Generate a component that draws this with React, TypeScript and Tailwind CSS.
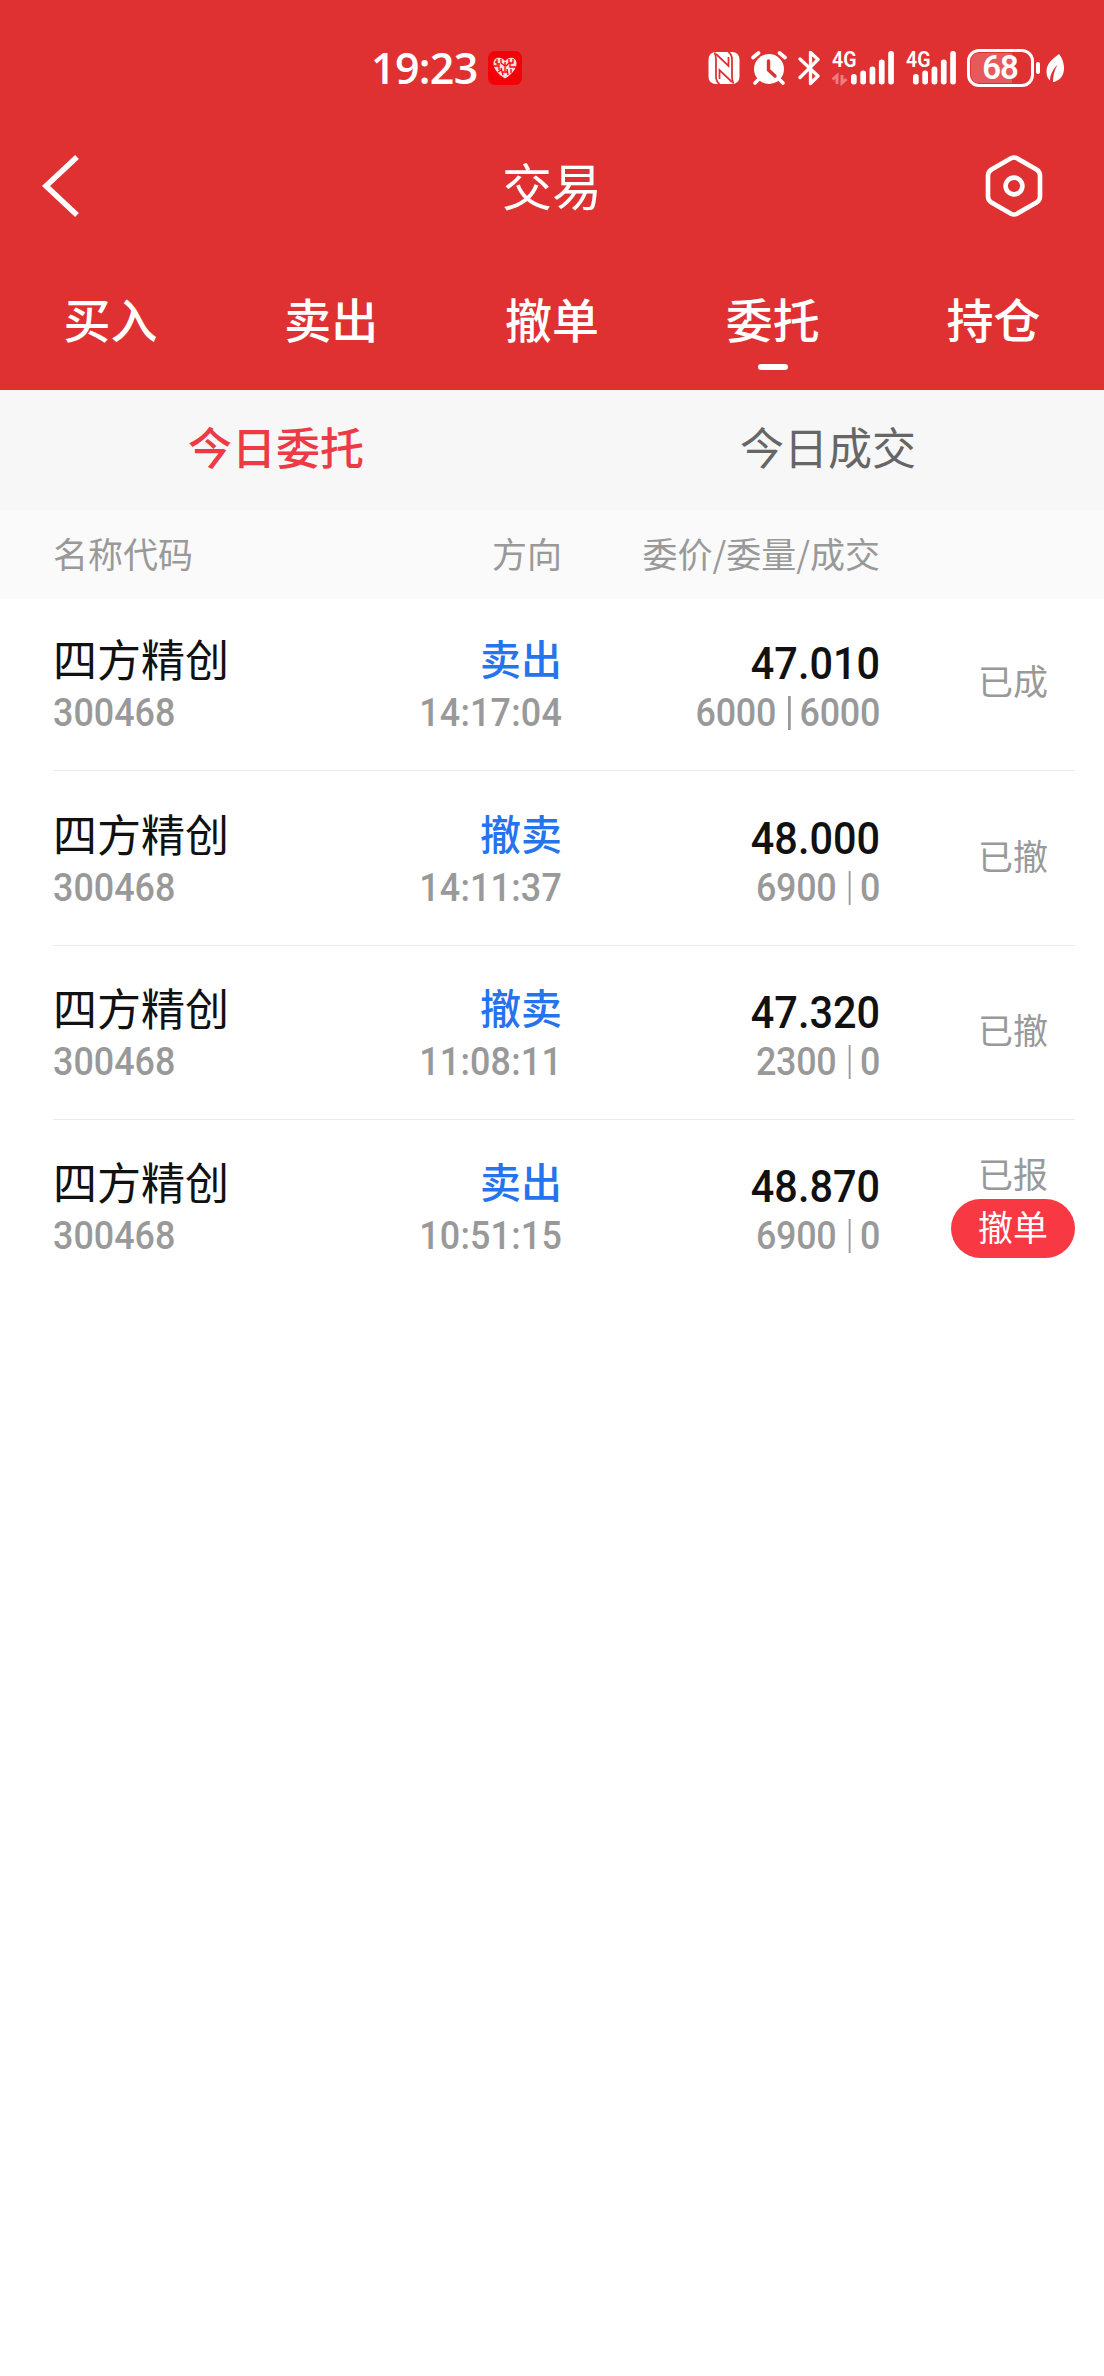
import clsx from "clsx"

interface Order {
  name: string
  code: string
  direction: string
  time: string
  price: string
  amount: string
  filled: string
  status: string
  cancellable?: boolean
}

const orders: Order[] = [
  { name: "四方精创", code: "300468", direction: "卖出", time: "14:17:04", price: "47.010", amount: "6000", filled: "6000", status: "已成" },
  { name: "四方精创", code: "300468", direction: "撤卖", time: "14:11:37", price: "48.000", amount: "6900", filled: "0", status: "已撤" },
  { name: "四方精创", code: "300468", direction: "撤卖", time: "11:08:11", price: "47.320", amount: "2300", filled: "0", status: "已撤" },
  { name: "四方精创", code: "300468", direction: "卖出", time: "10:51:15", price: "48.870", amount: "6900", filled: "0", status: "已报", cancellable: true },
]

const tabs = ["买入", "卖出", "撤单", "委托", "持仓"]

function AppBadge() {
  return (
    <svg className="ml-[11px]" width="34" height="34" viewBox="0 0 34 34">
      <rect width="34" height="34" rx="7" fill="#f30008" />
      <path
        d="M17 27.500C12 24.500 5.500 19 5.500 12.500C5.500 6 13 5 17 10C21 5 28.500 6 28.500 12.500C28.500 19 22 24.500 17 27.500Z"
        fill="#ffdcdc"
      />
      <path
        d="M9 8v5h3M6 15h5v4M13 8v4l4 3v-4M17 15v5M13 17l2 7M21 8v4l-3 3M25 8v4h-3v4h6M19 18l1 6M23 18v4M10 21l3-2M7 11h2M15 21h4"
        fill="none"
        stroke="#f30008"
        strokeWidth="1.300"
      />
    </svg>
  )
}

function NfcIcon() {
  return (
    <svg width="32" height="34" viewBox="0 0 32 34">
      <rect x="0.500" y="1" width="31" height="32" rx="7" fill="#fff" />
      {/* thin outlines leave a solid white N between the two side bars */}
      <path d="M6.500 1.500C8 4 8 6 8 9V26C8 29 9 31 11.500 33" fill="none" stroke="#df3132" strokeWidth="1.800" />
      <path d="M25.500 32.500C24 30 24 28 24 25V8C24 5 23 3 20.500 1" fill="none" stroke="#df3132" strokeWidth="1.800" />
      <path d="M8 3L20.500 15V6M24 31L11.500 19V28" fill="none" stroke="#df3132" strokeWidth="1.800" />
    </svg>
  )
}

function AlarmIcon() {
  return (
    <svg className="ml-[11px]" width="36" height="34" viewBox="0 0 36 34">
      <circle cx="18" cy="18" r="15" fill="#fff" />
      <path d="M2 6.500L7.500 2M34 6.500L28.500 2M8 28l-4 4M28 28l4 4" stroke="#fff" strokeWidth="3.600" strokeLinecap="round" />
      <path d="M17.500 10v9l6.500 6" fill="none" stroke="#df3132" strokeWidth="3.400" strokeLinecap="round" strokeLinejoin="round" />
    </svg>
  )
}

function BluetoothIcon() {
  return (
    <svg className="ml-[11px]" width="24" height="36" viewBox="0 0 24 36">
      <path
        d="M2 9L20 26L12.500 33.500V20M2 27.500L20 9.500L12.500 2.500V16"
        fill="none"
        stroke="#fff"
        strokeWidth="3.300"
        strokeLinecap="round"
        strokeLinejoin="round"
      />
    </svg>
  )
}

function SignalIcon({ active, className }: { active?: boolean; className?: string }) {
  // top edge of each bar, left to right
  const tops = [24, 20.5, 16.5, 9.5, 1]
  const start = active ? 19 : 7
  return (
    <svg className={className} width={active ? 62 : 50} height="52" viewBox={active ? "0 -8 62 52" : "0 -8 50 52"}>
      <text x="0" y="17" fontFamily="Roboto, sans-serif" fontSize="22.500" fontWeight="600" textLength="24.500" lengthAdjust="spacingAndGlyphs" fill="#fff">
        4G
      </text>
      {active && (
        <path d="M0.500 29.500L5 25.500V34M10 25V33L14.500 29" fill="none" stroke="#ee7d7e" strokeWidth="3" />
      )}
      {tops.map((top, i) => (
        <rect key={top} x={start + i * 9.3} y={top} width="5.700" height={34.5 - top} rx="2.700" fill="#fff" />
      ))}
    </svg>
  )
}

function BatteryIcon() {
  return (
    <div className="ml-[11px] flex items-center">
      <div className="flex h-[38px] w-[67px] rounded-[12px] border-[3px] border-white p-[1px]">
        <div className="flex w-[41px] items-center rounded-l-[8px] bg-[#e65a5c]">
          <span className="w-[58px] shrink-0 text-center font-[Roboto,sans-serif] text-[33px] leading-[30px] font-semibold tracking-[-1px]">68</span>
        </div>
      </div>
      <div className="ml-[2px] h-[12px] w-[4px] rounded-full bg-white" />
    </div>
  )
}

function LeafIcon() {
  return (
    <svg className="ml-[6px]" width="19" height="30" viewBox="0 0 19 30">
      <path d="M13 1C5 7 0.500 11 0.500 19C0.500 23 2 26 4 27.500C4 22 7 16 11.500 12C8.500 17 7 22 7 29C14 28 18.500 22 18 14C17.800 9 15.500 4 13 1Z" fill="#fff" />
    </svg>
  )
}

function StatusBar() {
  return (
    <div className="flex h-[136px] items-center pr-[39px] pl-[371px]">
      <span className="w-[106px] pb-[2px] font-['Open_Sans',sans-serif] text-[43px] leading-none font-semibold tracking-[-0.7px]">19:23</span>
      <AppBadge />
      <div className="ml-auto flex items-center">
        <NfcIcon />
        <AlarmIcon />
        <BluetoothIcon />
        <SignalIcon active className="ml-[10px]" />
        <SignalIcon className="ml-[12px]" />
        <BatteryIcon />
        <LeafIcon />
      </div>
    </div>
  )
}

function OrderRow({ order, first, last }: { order: Order; first: boolean; last: boolean }) {
  return (
    <div
      className={clsx(
        "mr-[29px] ml-[53px] flex items-end",
        first ? "h-[172px]" : last ? "h-[173px]" : "h-[174.5px]",
        !last && "border-b-[1.5px] border-[#ebebeb]"
      )}
    >
      <div className="h-[142px] w-[240px]">
        <p className="text-[44px] leading-[60px] text-[#111]">{order.name}</p>
        <p className="origin-left scale-x-[0.92] pt-[3px] font-[Roboto,sans-serif] text-[39px] leading-[44px] font-medium text-[#999]">{order.code}</p>
      </div>
      <div className="h-[142px] w-[269px] text-right">
        <p className="text-[41px] leading-[59px] font-medium text-[#2673ee]">{order.direction}</p>
        <p className="origin-right scale-x-[0.92] pt-[4px] font-[Roboto,sans-serif] text-[39px] leading-[44px] font-medium tracking-[0.2px] text-[#999]">{order.time}</p>
      </div>
      <div className="h-[142px] w-[318px] text-right">
        <p className="origin-right scale-x-[0.92] pt-[6px] font-[Roboto,sans-serif] text-[45px] leading-[60px] font-medium text-[#111]">{order.price}</p>
        <p className="-mt-[3px] flex origin-right scale-x-[0.92] items-center justify-end font-[Roboto,sans-serif] text-[39px] leading-[44px] font-medium tracking-[-0.3px] text-[#999]">
          <span>{order.amount}</span>
          <span className="mr-[10px] ml-[13px] h-[34px] w-[2.500px] bg-[#999]" />
          <span>{order.filled}</span>
        </p>
      </div>
      <div className="ml-auto flex h-[172px] w-[124px] shrink-0 flex-col items-center justify-center pb-[8px]">
        <span className={clsx("text-[35px] text-[#999]", order.cancellable ? "leading-[49px]" : "leading-[52px]")}>{order.status}</span>
        {order.cancellable && (
          <button className="mt-[2px] h-[59px] w-[124px] rounded-full bg-[#f83944] text-[35px] leading-[50px] text-white">
            <span className="block h-[55px]">撤单</span>
          </button>
        )}
      </div>
    </div>
  )
}

export default function App() {
  return (
    <div className="min-h-[2376px] w-[1104px] bg-white font-['Noto_Sans_CJK_SC',sans-serif]">
      <header className="h-[390px] bg-[#df3132] text-white">
        <StatusBar />

        <div className="grid h-[100px] grid-cols-3 items-center">
          <svg className="ml-[41px]" width="60" height="64" viewBox="0 0 60 64">
            <path d="M36 3L5 32L36 61" fill="none" stroke="#fff" strokeWidth="5.500" />
          </svg>
          <h1 className="pb-[5px] text-center text-[50px] leading-[60px] font-normal">交易</h1>
          <svg className="mr-[60px] justify-self-end" width="60" height="64" viewBox="0 0 60 64">
            <path
              d="M27 4.300Q30 2.700 33 4.300L52.500 15.500Q56 17.700 56 21.500V42.500Q56 46.300 52.500 48.500L33 59.700Q30 61.300 27 59.700L7.500 48.500Q4 46.300 4 42.500V21.500Q4 17.700 7.500 15.500Z"
              fill="none"
              stroke="#fff"
              strokeWidth="4.600"
            />
            <circle cx="30" cy="32" r="8.400" fill="none" stroke="#fff" strokeWidth="4.600" />
          </svg>
        </div>

        <nav className="grid h-[154px] grid-cols-5 pt-[52px]">
          {tabs.map((tab) => (
            <div key={tab} className="flex flex-col items-center">
              <span className="text-[47px] leading-[60px] font-medium">{tab}</span>
              {tab === "委托" && <span className="mt-[16px] h-[6px] w-[30px] rounded-full bg-white" />}
            </div>
          ))}
        </nav>
      </header>

      <div className="grid h-[120px] grid-cols-2 bg-[#f7f7f7] text-center text-[44px] leading-[112px]">
        <span className="font-medium text-[#ec3b45]">今日委托</span>
        <span className="text-[#666]">今日成交</span>
      </div>

      <div className="flex h-[89px] bg-[#fafafa] pl-[53px] text-[35px] leading-[85px] text-[#999]">
        <span className="w-[240px]">名称代码</span>
        <span className="w-[269px] text-right">方向</span>
        <span className="w-[318px] text-right">委价/委量/成交</span>
      </div>

      {orders.map((order, i) => (
        <OrderRow key={order.time} order={order} first={i === 0} last={i === orders.length - 1} />
      ))}
    </div>
  )
}
